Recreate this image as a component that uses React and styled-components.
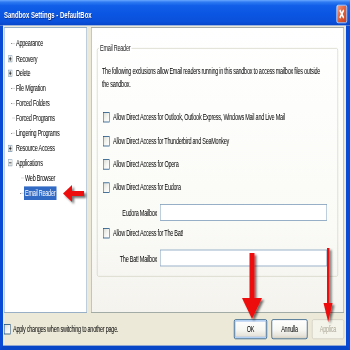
import React from "react";
import styled, { createGlobalStyle } from "styled-components";

const Global = createGlobalStyle`
  html, body { margin: 0; padding: 0; background: #fff; }
  body { font-family: "Liberation Sans", Arial, sans-serif; }
  #root { width: 350px; height: 350px; }
`;

const Viewport = styled.div`
  position: relative;
  width: 350px;
  height: 350px;
  overflow: hidden;
`;

/* The dialog is laid out at its native size and squeezed to the screenshot's proportions */
const Window = styled.div`
  width: 700px;
  height: 437.5px;
  transform: scale(0.5, 0.8);
  transform-origin: 0 0;
  display: flex;
  flex-direction: column;
  font: 11px/12px "Liberation Sans", Arial, sans-serif;
  letter-spacing: -0.5px;
  color: #000;
`;

const TitleBar = styled.div`
  height: 32px;
  flex: none;
  display: flex;
  align-items: flex-start;
  justify-content: space-between;
  padding: 0 6px 0 8px;
  box-sizing: border-box;
  background: linear-gradient(
    to bottom,
    #6aa8ff 0%,
    #2f7bf2 8%,
    #115fe9 22%,
    #0a56e2 55%,
    #0a50da 85%,
    #0845c8 100%
  );
`;

const Title = styled.span`
  font: bold 12px/14px "Liberation Sans", Arial, sans-serif;
  letter-spacing: 0;
  color: #fff;
  text-shadow: 1px 1px 0 #0b2f8f;
  margin-top: 12px;
`;

const CloseButton = styled.span`
  width: 21px;
  height: 23px;
  margin-top: 6px;
  box-sizing: border-box;
  border: 1px solid #fff;
  border-radius: 3px;
  background: linear-gradient(135deg, #f0a088 0%, #e2643f 45%, #c4401b 100%);
  display: flex;
  align-items: center;
  justify-content: center;
`;

const Body = styled.div`
  flex: 1;
  min-height: 0;
  background: #ece9d8;
  border-left: 6px solid #0a4bd6;
  border-right: 8px solid #0a4bd6;
  border-bottom: 6px solid #0846c8;
  padding: 2px 4px 0 2px;
  display: grid;
  grid-template-columns: 166px 1fr;
  grid-template-rows: 357px 1fr;
  column-gap: 8px;
`;

const Tree = styled.div`
  background: #fff;
  border: 1px solid #7f9db9;
  padding-top: 10px;
`;

const TreeRow = styled.div`
  height: 18.7px;
  display: flex;
  align-items: center;
  padding-left: ${(p) => 7 + p.$level * 18}px;
`;

const ExpanderBox = styled.svg`
  flex: none;
  margin-right: 5px;
`;

const Connector = styled.span`
  flex: none;
  width: 8px;
  height: 0;
  margin-left: 6px;
  border-top: 1px dotted #909090;
`;

const NodeLabel = styled.span`
  padding: 0 2px;
  height: 17px;
  line-height: 17px;
  white-space: nowrap;
  background: ${(p) => (p.$selected ? "#316ac5" : "transparent")};
  color: ${(p) => (p.$selected ? "#fff" : "#000")};
`;

const Panel = styled.div`
  background: linear-gradient(to bottom, #ffffff 0%, #fafaf6 70%, #f4f3ee 100%);
  border: 1px solid #919b9c;
  padding: 25px 11px 0 11px;
`;

const GroupBox = styled.div`
  border: 1px solid #d0d0bf;
  border-radius: 3px;
  padding: 0 10px 12px 9px;
  display: flex;
  flex-direction: column;
`;

const GroupTitle = styled.span`
  align-self: flex-start;
  margin: -7px 0 0 -6px;
  padding: 0 2px;
  line-height: 12px;
  background: #fff;
  color: #222;
`;

const Description = styled.p`
  margin: 15px 0 0 0;
  width: 452px;
  line-height: 16px;
`;

const CheckRow = styled.label`
  display: flex;
  align-items: center;
  height: 16px;
  margin-top: ${(p) => p.$mt}px;
  margin-left: 2px;
  white-space: nowrap;
`;

const Check = styled.span`
  flex: none;
  width: 13px;
  height: 13px;
  box-sizing: border-box;
  border: 1px solid #1c5180;
  background: linear-gradient(135deg, #dcdcd7 0%, #f6f6f4 60%, #ffffff 100%);
  margin-right: ${(p) => p.$gap}px;
`;

const InputRow = styled.div`
  display: flex;
  align-items: center;
  height: 21px;
  margin-top: ${(p) => p.$mt}px;
`;

const FieldLabel = styled.span`
  width: 110px;
  margin-right: 6px;
  text-align: right;
  white-space: nowrap;
`;

const TextBox = styled.span`
  width: 334px;
  height: 21px;
  box-sizing: border-box;
  border: 1px solid #7f9db9;
  background: #fff;
`;

const BottomBar = styled.div`
  grid-column: 1 / -1;
  display: flex;
  align-items: center;
  justify-content: space-between;
`;

const ApplyOption = styled.label`
  display: flex;
  align-items: center;
  white-space: nowrap;
`;

const Buttons = styled.div`
  display: flex;
  gap: 9px;
`;

const Button = styled.button`
  width: ${(p) => p.$w}px;
  height: 25px;
  padding: 0;
  border-radius: 3px;
  font: 11px "Liberation Sans", Arial, sans-serif;
  letter-spacing: -0.5px;
  border: 1px solid ${(p) => (p.$disabled ? "#c9c7ba" : "#003c74")};
  color: ${(p) => (p.$disabled ? "#aca899" : "#000")};
  background: ${(p) =>
    p.$disabled
      ? "#f5f4ea"
      : "linear-gradient(to bottom, #ffffff 0%, #f6f6f2 55%, #e6e3da 85%, #d6d0c5 100%)"};
  box-shadow: ${(p) =>
    p.$default ? "inset 0 0 0 1px #cee7ff, inset 0 0 0 2px #98b8ea" : "none"};
`;

const Overlay = styled.svg`
  position: absolute;
  left: 0;
  top: 0;
  pointer-events: none;
`;

function Expander({ open }) {
  return (
    <ExpanderBox width="9" height="9" viewBox="0 0 9 9">
      <defs>
        <linearGradient id="exg" x1="0" y1="0" x2="1" y2="1">
          <stop offset="0" stopColor="#ffffff" />
          <stop offset="1" stopColor="#d8d5ca" />
        </linearGradient>
      </defs>
      <rect x="0.5" y="0.5" width="8" height="8" fill="url(#exg)" stroke="#7f9db9" />
      <line x1="2" y1="4.5" x2="7" y2="4.5" stroke="#000" />
      {!open && <line x1="4.5" y1="2" x2="4.5" y2="7" stroke="#000" />}
    </ExpanderBox>
  );
}

const treeItems = [
  { label: "Appearance", level: 0 },
  { label: "Recovery", level: 0, expander: "closed" },
  { label: "Delete", level: 0, expander: "closed" },
  { label: "File Migration", level: 0 },
  { label: "Forced Folders", level: 0 },
  { label: "Forced Programs", level: 0 },
  { label: "Lingering Programs", level: 0 },
  { label: "Resource Access", level: 0, expander: "closed" },
  { label: "Applications", level: 0, expander: "open" },
  { label: "Web Browser", level: 1 },
  { label: "Email Reader", level: 1, selected: true },
];

export default function App() {
  return (
    <Viewport>
      <Global />
      <Window>
        <TitleBar>
          <Title>Sandbox Settings - DefaultBox</Title>
          <CloseButton>
            <svg width="11" height="13" viewBox="0 0 11 13">
              <line x1="1.5" y1="1.5" x2="9.5" y2="11.5" stroke="#fff" strokeWidth="2.6" />
              <line x1="9.5" y1="1.5" x2="1.5" y2="11.5" stroke="#fff" strokeWidth="2.6" />
            </svg>
          </CloseButton>
        </TitleBar>
        <Body>
          <Tree>
            {treeItems.map((it) => (
              <TreeRow key={it.label} $level={it.level}>
                {it.expander ? <Expander open={it.expander === "open"} /> : <Connector />}
                <NodeLabel $selected={it.selected}>{it.label}</NodeLabel>
              </TreeRow>
            ))}
          </Tree>
          <Panel>
            <GroupBox>
              <GroupTitle>Email Reader</GroupTitle>
              <Description>
                The following exclusions allow Email readers running in this sandbox to access
                mailbox files outside the sandbox.
              </Description>
              <CheckRow $mt={25}>
                <Check $gap={7} />
                Allow Direct Access for Outlook, Outlook Express, Windows Mail and Live Mail
              </CheckRow>
              <CheckRow $mt={14}>
                <Check $gap={7} />
                Allow Direct Access for Thunderbird and SeaMonkey
              </CheckRow>
              <CheckRow $mt={13}>
                <Check $gap={7} />
                Allow Direct Access for Opera
              </CheckRow>
              <CheckRow $mt={13}>
                <Check $gap={7} />
                Allow Direct Access for Eudora
              </CheckRow>
              <InputRow $mt={13}>
                <FieldLabel>Eudora Mailbox</FieldLabel>
                <TextBox />
              </InputRow>
              <CheckRow $mt={7}>
                <Check $gap={7} />
                Allow Direct Access for The Bat!
              </CheckRow>
              <InputRow $mt={13}>
                <FieldLabel>The Bat! Mailbox</FieldLabel>
                <TextBox />
              </InputRow>
            </GroupBox>
          </Panel>
          <BottomBar>
            <ApplyOption>
              <Check $gap={5} />
              Apply changes when switching to another page.
            </ApplyOption>
            <Buttons>
              <Button $w={66} $default>OK</Button>
              <Button $w={72}>Annulla</Button>
              <Button $w={64} $disabled>Applica</Button>
            </Buttons>
          </BottomBar>
        </Body>
      </Window>
      <Overlay width="350" height="350" viewBox="0 0 350 350">
        <defs>
          <filter id="arrowShadow" x="-50%" y="-50%" width="200%" height="200%">
            <feDropShadow dx="2" dy="2" stdDeviation="1.3" floodColor="#000" floodOpacity="0.55" />
          </filter>
        </defs>
        <g fill="#ee1010" filter="url(#arrowShadow)">
          <polygon points="63,193.5 72,185 72,191 84,191 84,196 72,196 72,202" />
          <polygon points="249.5,253 254.5,253 254.5,298 262,298 252,319 242,298 249.5,298" />
          <polygon points="327,248 329.5,248 329.5,303 332.5,303 328.2,322 323.5,303 327,303" />
        </g>
      </Overlay>
    </Viewport>
  );
}
